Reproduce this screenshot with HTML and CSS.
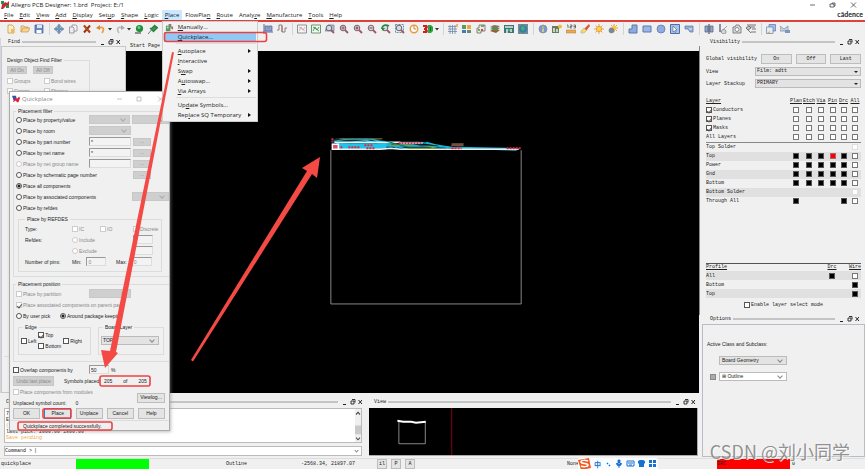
FILE: index.html
```html
<!DOCTYPE html>
<html lang="en">
<head>
<meta charset="utf-8">
<title>Allegro PCB Designer: 1.brd Project: E:/1</title>
<link rel="stylesheet" href="styles.css">
</head>
<body>
<svg class="defs" aria-hidden="true">
  <defs>
    <symbol id="new" viewBox="0 0 10 10"><path d="M2 1h4l2 2v6H2z" fill="#fff0c4" stroke="#c89648" stroke-width=".8"/><path d="M5 5h3v4H5z" fill="#f0bc58"/></symbol>
    <symbol id="open" viewBox="0 0 10 10"><path d="M1 8V2h3l1 1h3v2" fill="#f6dda6" stroke="#c99a54" stroke-width=".8"/><path d="M1 8l2-4h7L8 8z" fill="#f9d58c" stroke="#b98a48" stroke-width=".6"/></symbol>
    <symbol id="save" viewBox="0 0 10 10"><path d="M1 1h8v8H1z" fill="#6b87c4" stroke="#405a94" stroke-width=".7"/><path d="M3 1h5v3H3z" fill="#dce6fa"/><path d="M2.500 6h5v3h-5z" fill="#fff"/></symbol>
    <symbol id="move" viewBox="0 0 10 10"><path d="M5 0l2 2.500H6V4h1.500V3L10 5 7.500 7V6H6v1.500h1L5 10 3 7.500h1V6H2.500v1L0 5l2.500-2v1H4V2.500H3z" fill="#7199bd" stroke="#48708f" stroke-width=".4"/></symbol>
    <symbol id="copy" viewBox="0 0 10 10"><path d="M4 1h4l1 1v5H4z" fill="#f5f5f5" stroke="#8c8c94" stroke-width=".8"/><path d="M1.500 3H5l1 1v5H1.500z" fill="#ededf2" stroke="#85858c" stroke-width=".8"/></symbol>
    <symbol id="delete" viewBox="0 0 10 10"><path d="M2 1.500l6 7M8 1.500l-6 7" stroke="#9c3210" stroke-width="2"/><path d="M2 1.500l5 6" stroke="#e06818" stroke-width=".7"/></symbol>
    <symbol id="undo" viewBox="0 0 10 10"><path d="M3 4c4-2 6 1 3 5" fill="none" stroke="#eda247" stroke-width="1.800"/><path d="M0 4l4-3v5z" fill="#d8842c"/></symbol>
    <symbol id="redo" viewBox="0 0 10 10"><path d="M7 4C3 2 1 5 4 9" fill="none" stroke="#b9b9b9" stroke-width="1.500"/><path d="M10 4L6 1v5z" fill="#aaa"/></symbol>
    <symbol id="gem" viewBox="0 0 10 10"><path d="M1 8.500h6v1H1z" fill="#333"/><circle cx="5.500" cy="4.500" r="3.600" fill="#1d8c3c"/><circle cx="5" cy="3.500" r="1.500" fill="#74cc82"/></symbol>
    <symbol id="pin" viewBox="0 0 10 10"><path d="M0 10l3.500-4" stroke="#555" stroke-width=".8"/><path d="M2 4l4 4M5 7l-2-2 3-3 3 2-3 3M6 1l4 3" fill="#3b9a50" stroke="#2a803e" stroke-width="1.300"/></symbol>
    <symbol id="ruler" viewBox="0 0 10 10"><path d="M1 0v10M0 8h10" stroke="#536da2"/><path d="M2 2h7v5H2z" fill="#8ca4d0" stroke="#49649c" stroke-width=".7"/><path d="M4 4h3" stroke="#c96868"/></symbol>
    <symbol id="wave" viewBox="0 0 10 10"><path d="M0 6h2V1h3v7h3V4h2" fill="none" stroke="#777" stroke-width=".9"/><path d="M5 2v6" stroke="#bc6565"/></symbol>
    <symbol id="rats" viewBox="0 0 10 10"><path d="M.500 1h9v8h-9z" fill="#f4f4f4" stroke="#6e7d88" stroke-width=".8"/><path d="M2 7l2-4 2 3 2-3M2 3l6 4" fill="none" stroke="#c89898" stroke-width=".7"/></symbol>
    <symbol id="ratsg" viewBox="0 0 10 10"><path d="M.500 1h9v8h-9z" fill="#eef8ee" stroke="#587858" stroke-width=".8"/><path d="M2 7l2-4 2 3 2-3M2 3l6 4" fill="none" stroke="#299137" stroke-width=".8"/></symbol>
    <symbol id="lens" viewBox="0 0 10 10"><path d="M6 6l3 3" stroke="#a55858" stroke-width="1.800"/><circle cx="4" cy="4" r="2.800" fill="#ccdfe9" stroke="#765f6c" stroke-width="1"/></symbol>
    <symbol id="zwin" viewBox="0 0 10 10"><path d="M0 7l3-6h6v6z" fill="#b0c3dd" stroke="#506c8f" stroke-width=".6"/><use href="#lens"/></symbol>
    <symbol id="zfill" viewBox="0 0 10 10"><use href="#lens"/><path d="M2.500 2.500h3v3h-3z" fill="#a97080"/></symbol>
    <symbol id="zin" viewBox="0 0 10 10"><use href="#lens"/><path d="M2.500 4h3M4 2.500v3" stroke="#a62525"/></symbol>
    <symbol id="zout" viewBox="0 0 10 10"><use href="#lens"/><path d="M2.500 4h3" stroke="#a62525"/></symbol>
    <symbol id="zprev" viewBox="0 0 10 10"><use href="#lens"/><path d="M1 5c0-4 4-5 7-3" fill="none" stroke="#278b3c" stroke-width="1.600"/><path d="M0 4h4L2 7z" fill="#278b3c"/></symbol>
    <symbol id="zsel" viewBox="0 0 10 10"><path d="M.500.500h8v8h-8z" fill="#e2f0f7" stroke="#4c7b91" stroke-width=".8" stroke-dasharray="2 1"/><use href="#lens"/></symbol>
    <symbol id="refresh" viewBox="0 0 10 10"><circle cx="5" cy="5" r="3.700" fill="#fff" stroke="#e79b43" stroke-width="1.500"/><path d="M5 2v3h2" fill="none" stroke="#db7c20" stroke-width="1"/></symbol>
    <symbol id="three" viewBox="0 0 10 10"><path d="M0 1h4l1 2-1 2 1 2-1 2H0V7h2V6H1V4h1V3H0z" fill="#cf2020"/><path d="M5 1h3l2 2v4L8 9H5z" fill="#2ca542"/><path d="M7 3h1v4H7z" fill="#146c27"/></symbol>
    <symbol id="grid" viewBox="0 0 10 10"><path d="M0 2.500h9M0 5h9M0 7.500h9M2 1v9M4.500 1v9M7 1v9" stroke="#7088ad" stroke-width=".8"/><path d="M8 0h2v3H8z" fill="#efb26f"/></symbol>
    <symbol id="tiles" viewBox="0 0 10 10"><path d="M0 1h4v4H0z" fill="#559d5d"/><path d="M5 1h4v4H5z" fill="#eea544"/><path d="M0 6h4v3H0z" fill="#4c77b5"/><path d="M5 6h4v3H5z" fill="#658c6b"/></symbol>
    <symbol id="sheet" viewBox="0 0 10 10"><path d="M3 1h6v6H5v2H1V4h2z" fill="#e9e9e2" stroke="#77776e" stroke-width=".9"/><path d="M5 2h3M2 6h2" stroke="#51925b" stroke-width="1.500"/><path d="M5 5h2v2H5z" fill="#c64a4a"/></symbol>
    <symbol id="layers" viewBox="0 0 10 10"><path d="M0 7l4-2 6 1-4 3z" fill="#a4533d"/><path d="M0 5l4-2 6 1-4 3z" fill="#4a9a44"/><path d="M0 3l4-2 6 1-4 3z" fill="#7f7760"/></symbol>
    <symbol id="board" viewBox="0 0 10 10"><path d="M0 1h10v8H0z" fill="#3c7778"/><path d="M1 2h8v2H1zM2 5h2v4H2zM6 5h2v3H6z" fill="#b8ccd2"/><path d="M4 5h2v2H4z" fill="#35b05b"/></symbol>
    <symbol id="globe" viewBox="0 0 10 10"><path d="M0 0h10v10H0z" fill="#748b91"/><circle cx="5" cy="5" r="3.800" fill="#347eb0"/><path d="M3 3l3-1 1 3-2 2-2-2z" fill="#4caf66"/></symbol>
    <symbol id="info" viewBox="0 0 10 10"><circle cx="5" cy="5" r="4" fill="#7b99c8" stroke="#8d8fa0" stroke-width=".8"/><path d="M5 4.500V8M5 2.500v1" stroke="#f5e37b" stroke-width="1.300"/></symbol>
    <symbol id="elem" viewBox="0 0 10 10"><path d="M0 2h7v7H0z" fill="#61805f"/><path d="M1 4h2v4H1zM4 5h2v3H4z" fill="#c8d6bd"/><path d="M3 4h1v2H3z" fill="#d43d3d"/><circle cx="8" cy="2.500" r="2" fill="#f0bf35"/></symbol>
    <symbol id="measure" viewBox="0 0 10 10"><path d="M0 6h10v3H0z" fill="#e9a953" stroke="#af7b35" stroke-width=".5"/><path d="M1 1h1v3M4 1h2v1.500H4V4h2M7.500 1h2v3h-2M7.500 2.500h2" fill="none" stroke="#555" stroke-width=".8"/></symbol>
    <symbol id="brush" viewBox="0 0 10 10"><path d="M9 0l1 2-4 5-2-2z" fill="#db5636"/><path d="M4 4l2.500 2.500L4 9H1V7z" fill="#f1d96a" stroke="#aaa27a" stroke-width=".5"/></symbol>
    <symbol id="sun" viewBox="0 0 10 10"><path d="M5 0v10M0 5h10M1.500 1.500l7 7M8.500 1.500l-7 7" stroke="#e59a2c" stroke-width=".9"/><circle cx="5" cy="5" r="2.600" fill="#ffd34c" stroke="#db8b24" stroke-width=".7"/></symbol>
    <symbol id="shade" viewBox="0 0 10 10"><path d="M6 0v8M2 4h8M3 1l6 6M9 1L3 7" stroke="#e59a2c" stroke-width=".9"/><circle cx="6" cy="4" r="2.300" fill="#ffc646"/><circle cx="3.500" cy="6.500" r="2.800" fill="#7a8794"/></symbol>
    <symbol id="poly" viewBox="0 0 10 10"><path d="M4 1h5v8H1V5h3z" fill="#8caadb" stroke="#5b79ae"/></symbol>
    <symbol id="rect" viewBox="0 0 10 10"><path d="M1 2h8v6H1z" fill="#9ab6e4" stroke="#5b79ae"/></symbol>
    <symbol id="circ" viewBox="0 0 10 10"><circle cx="5" cy="5" r="4" fill="#8faadd" stroke="#5f7bb1" stroke-width=".8"/></symbol>
    <symbol id="select" viewBox="0 0 10 10"><path d="M.500.500h9v9h-9z" fill="#a9c1e8" stroke="#4c6fae"/><path d="M3 2l4 4-2 .3L6 8 5 8.500 4.200 7 3 8z" fill="#fff" stroke="#394e74" stroke-width=".5"/></symbol>
    <symbol id="void" viewBox="0 0 10 10"><path d="M1 2h8v6H6L4 5H1z" fill="#93abd7" stroke="#6680ad" stroke-width=".8"/><path d="M5 5h3" stroke="#eee"/></symbol>
    <symbol id="mirror" viewBox="0 0 10 10"><path d="M1 2h3v6H1zM6 2h3v6H6z" fill="#8da5cc" stroke="#57698a" stroke-width=".8"/><path d="M5 0v10" stroke="#333"/></symbol>
    <symbol id="angle" viewBox="0 0 10 10"><path d="M2 0v8" stroke="#63748e" stroke-width="1.500"/><path d="M3 8l6-6" stroke="#8b929d" stroke-width=".8"/><path d="M3 8c1-4 5-3 5 0s-4 2-5 0" fill="#d2d5da" stroke="#777" stroke-width=".7"/></symbol>
    <symbol id="camera" viewBox="0 0 10 10"><path d="M1 3h2l1-2h3l1 2h1v6H1z" fill="#ddd" stroke="#777" stroke-width=".9"/><circle cx="5" cy="5.500" r="2" fill="#fff" stroke="#687585" stroke-width=".8"/></symbol>
    <symbol id="drill" viewBox="0 0 10 10"><path d="M1 1h9M4 3h5M6 5h4M5 8h5" stroke="#666" stroke-width=".9"/><path d="M0 4l3-2 2 2-3 2zM2 6l3 3" fill="#ccc" stroke="#555" stroke-width=".8"/></symbol>
    <symbol id="windows" viewBox="0 0 10 10"><path d="M3 .500h6.500V7H3z" fill="#a3bce9" stroke="#6079a7" stroke-width=".7"/><path d="M.500 3H7v6.500H.500z" fill="#e7ecf4" stroke="#6680ad" stroke-width=".7"/><path d="M1 9l3-2v2z" fill="#edb143"/></symbol>
    <symbol id="mail" viewBox="0 0 10 10"><path d="M0 2l4 3 4-3v5H0z" fill="#c5d0de" stroke="#788ba4" stroke-width=".7"/><path d="M5 6h5v3H5z" fill="#7d98bd"/></symbol>
    <symbol id="logo" viewBox="0 0 10 10"><path d="M0 1h5l1 4-4 2z" fill="#215baa"/><path d="M3 3l3 2 3-3 1 2-2 5H6L5 7 1 9l2-4z" fill="#db2237"/></symbol>
    <symbol id="caret" viewBox="0 0 5 10"><path d="M0 4h4L2 6.500z" fill="#333"/></symbol>
    <symbol id="ctl" viewBox="0 0 20 8"><path d="M1 6.500h3" stroke="#222"/><path d="M10 1.500h3v3M9 3h3v3H9z" fill="none" stroke="#222" stroke-width=".9"/><path d="M16.500 2l3.500 4M20 2l-3.500 4" stroke="#222"/></symbol>
  </defs>
</svg>

<header>
  <div class="titlebar">
    <svg class="app" aria-hidden="true"><path d="M0 0l2 3 2-2 2 1 2-2v7H6L5 5 2 8H0l1-4z" fill="#c92b35"/><path d="M0 0h3v3H0zM5 4h3v3H5z" fill="#239249"/></svg>
    <span>Allegro PCB Designer: 1.brd&nbsp; Project: E:/1</span>
    <svg class="wincontrols" viewBox="0 0 50 10" aria-hidden="true"><path d="M2 5h5M22 4h4v3h-4zM24 4V3h3v3h-1M43 2.500l5 5M48 2.500l-5 5" fill="none" stroke="#444" stroke-width=".8"/></svg>
  </div>
  <nav class="menubar">
    <button><u>F</u>ile</button><button><u>E</u>dit</button><button><u>V</u>iew</button><button><u>A</u>dd</button><button><u>D</u>isplay</button><button>Set<u>u</u>p</button><button><u>S</u>hape</button><button><u>L</u>ogic</button>
    <div class="open">
      <button class="active"><u>P</u>lace</button>
      <div class="menu">
        <svg class="menuicon" viewBox="0 0 10 10" aria-hidden="true"><path d="M1 3h5v6H1z" fill="#4c995a"/><path d="M4 1h3v3h2v3H7V5H4z" fill="#897c78"/><path d="M2 4h2v2H2z" fill="#bfdfc2"/></svg>
        <button><u>M</u>anually...</button>
        <button class="hot"><u>Q</u>uickplace...</button>
        <hr>
        <button class="sub"><u>A</u>utoplace</button>
        <button><u>I</u>nteractive</button>
        <button class="sub">S<u>w</u>ap</button>
        <button class="sub">A<u>u</u>toswap...</button>
        <button class="sub"><u>V</u>ia Arrays</button>
        <hr>
        <button>Up<u>d</u>ate Symbols...</button>
        <button class="sub">Rep<u>l</u>ace SQ Temporary</button>
      </div>
    </div>
    <button>FlowPla<u>n</u></button><button><u>R</u>oute</button><button>Analy<u>z</u>e</button><button><u>M</u>anufacture</button><button><u>T</u>ools</button><button><u>H</u>elp</button>
    <span class="brand">cādence</span>
  </nav>
  <div class="toolbar">
    <div class="tools"><svg><use href="#new"/></svg><svg><use href="#open"/></svg><svg><use href="#save"/></svg></div>
    <div class="tools"><svg><use href="#move"/></svg><svg><use href="#copy"/></svg><svg><use href="#delete"/></svg><svg><use href="#undo"/></svg><svg class="caret"><use href="#caret"/></svg><svg><use href="#redo"/></svg><svg class="caret"><use href="#caret"/></svg><svg><use href="#gem"/></svg><svg><use href="#pin"/></svg></div>
    <div class="tools wide"><svg><use href="#ruler"/></svg><svg><use href="#wave"/></svg></div>
    <div class="tools"><svg><use href="#rats"/></svg><svg><use href="#ratsg"/></svg><svg><use href="#zwin"/></svg><svg><use href="#zfill"/></svg><svg><use href="#zin"/></svg><svg><use href="#zout"/></svg><svg><use href="#zprev"/></svg><svg><use href="#zsel"/></svg><svg><use href="#refresh"/></svg><svg><use href="#three"/></svg><svg class="caret"><use href="#caret"/></svg></div>
    <div class="tools"><svg><use href="#grid"/></svg><svg><use href="#tiles"/></svg><svg><use href="#sheet"/></svg><svg><use href="#layers"/></svg><svg><use href="#board"/></svg><svg><use href="#globe"/></svg></div>
    <div class="tools"><svg><use href="#info"/></svg><svg><use href="#elem"/></svg><svg><use href="#measure"/></svg><svg><use href="#brush"/></svg><svg><use href="#sun"/></svg><svg><use href="#shade"/></svg></div>
    <div class="tools"><svg><use href="#poly"/></svg><svg><use href="#rect"/></svg><svg><use href="#circ"/></svg><svg><use href="#select"/></svg><svg><use href="#void"/></svg></div>
    <div class="tools"><svg><use href="#mirror"/></svg><svg><use href="#angle"/></svg><svg><use href="#camera"/></svg><svg><use href="#drill"/></svg></div>
    <div class="tools"><svg><use href="#windows"/></svg><svg><use href="#mail"/></svg></div>
  </div>
</header>

<main>
  <div class="work">
    <div class="upper">
      <aside class="find">
        <h2 class="dock">Find<i></i><svg><use href="#ctl"/></svg></h2>
        <div class="findbody">
          <fieldset class="filter">
            <legend>Design Object Find Filter</legend>
            <div class="pair"><button class="btn off" disabled>All On</button><button class="btn off" disabled>All Off</button></div>
            <div class="checks">
              <label><input type="checkbox" disabled>Groups</label><label><input type="checkbox" disabled>Bond wires</label>
              <label><input type="checkbox" disabled>Comps</label><label><input type="checkbox" disabled>Shapes</label>
            </div>
          </fieldset>
        </div>
      </aside>
      <section class="design">
        <div class="tab">Start Page</div>
        <div class="canvas">
          <svg viewBox="0 0 572 341" preserveAspectRatio="xMinYMid meet" aria-hidden="true">
            <path d="M204.500 99v153.500h190V99" fill="none" stroke="#a8a8a8" stroke-width=".8"/>
            <path d="M206 98l-1-9 5-2h40l18 5 40 2 40 4 46 1z" fill="#0e5a70" opacity=".6"/>
            <path d="M213 87.500h43M216 87l5 1" stroke="#8a5d15" fill="none"/>
            <path d="M208 90l12-2h25l15 5 22 5M210 93l30-4 25 6 30-4 35 6 60 2M214 95h80l-20-4 18 0 40 6M240 90l40 4 40 2 70 2M246 88l15 4 12 6M300 91l22 6M330 96l50 1" fill="none" stroke="#18b4d8"/>
            <path d="M210 92h50v6h-50z" fill="#20c4ea"/>
            <path d="M208 91h66M274 92h22" stroke="#f3f3f3" stroke-width="1.500"/>
            <path d="M209 98h45l10-1 10 1h118" stroke="#eee" stroke-width="1.500" fill="none"/>
            <path d="M264 94h22M282 97h28l-8-2" stroke="#7ea51c" fill="none"/>
            <path d="M260 90l22 6" stroke="#1f6b50"/>
            <path d="M206 87v4M215 97v-3M222 96h12M238 94h9M240 97h9M272 92h23M325 94h12M325 97h10M380 97h15" stroke="#d72b45" stroke-width="2" stroke-dasharray="2 1"/>
            <path d="M206 93h6v5h-6z" fill="#e94c60" stroke="#fff" stroke-width="1.500"/>
            <path d="M325 92h12v3h-12" fill="#73503d"/>
          </svg>
        </div>
      </section>
    </div>
    <div class="lower">
      <section class="command">
        <h2 class="dock">Command<i></i><svg><use href="#ctl"/></svg></h2>
        <div class="log">
          <div class="lines"><p>7</p><p>E</p><p class="warn">(</p><p>last pick: 2000.00 1800.00</p><p class="warn">Save pending</p></div>
          <div class="scroll"><svg viewBox="0 0 6 30" preserveAspectRatio="none" aria-hidden="true"><path d="M0 15h6v8H0z" fill="#c9c9c9"/><path d="M1 5l2-2 2 2M1 26l2 2 2-2" fill="none" stroke="#444"/></svg></div>
        </div>
        <label class="prompt">Command &gt;<input type="text" value="|"><span class="chev"></span></label>
      </section>
      <section class="view">
        <h2 class="dock">View<i></i><svg><use href="#ctl"/></svg></h2>
        <div class="mini">
          <svg viewBox="0 0 330 48" preserveAspectRatio="xMinYMin meet" aria-hidden="true"><path d="M30.500 14v22.500h27V14" fill="none" stroke="#aaa" stroke-width=".8"/><path d="M29 13l6 1h8l5 1 10-1" fill="none" stroke="#fff" stroke-width="2"/><path d="M84.500 0v48" stroke="#8d0012"/></svg>
        </div>
      </section>
    </div>
  </div>

  <aside class="side">
    <h2 class="dock">Visibility<i></i><svg><use href="#ctl"/></svg></h2>
    <div class="visibility">
      <div class="global"><span>Global visibility</span><button class="btn">On</button><button class="btn">Off</button><button class="btn">Last</button></div>
      <label class="field">View<span class="sel solid"><select><option>Film: adtt</option></select></span></label>
      <label class="field">Layer Stackup<span class="sel solid"><select><option>PRIMARY</option></select></span></label>
      <table class="layers">
        <colgroup><col><col class="c14"><col class="c12"><col class="c12"><col class="c11"><col class="c11"><col class="c12"></colgroup>
        <thead><tr><th>Layer</th><th>Plan</th><th>Etch</th><th>Via</th><th>Pin</th><th>Drc</th><th>All</th></tr></thead>
        <tbody class="kinds">
          <tr><td><label><input type="checkbox" checked>Conductors</label></td><td><b></b></td><td><b></b></td><td><b></b></td><td><b></b></td><td><b></b></td><td><b></b></td></tr>
          <tr><td><label><input type="checkbox" checked>Planes</label></td><td><b></b></td><td><b></b></td><td><b></b></td><td><b></b></td><td><b></b></td><td><b></b></td></tr>
          <tr><td><label><input type="checkbox" checked>Masks</label></td><td><b></b></td><td><b></b></td><td><b></b></td><td><b></b></td><td><b></b></td><td><b></b></td></tr>
          <tr><td>All Layers</td><td><b></b></td><td><b></b></td><td><b></b></td><td><b></b></td><td><b></b></td><td><b></b></td></tr>
        </tbody>
      </table>
      <table class="layers striped">
        <colgroup><col><col class="c14"><col class="c12"><col class="c12"><col class="c11"><col class="c11"><col class="c12"></colgroup>
        <tbody>
          <tr><td>Top Solder</td><td></td><td></td><td></td><td></td><td></td><td><b class="dim"></b></td></tr>
          <tr><td>Top</td><td><b class="k"></b></td><td><b class="k"></b></td><td><b class="k"></b></td><td><b class="r"></b></td><td><b class="k"></b></td><td><b></b></td></tr>
          <tr><td>Power</td><td><b class="k"></b></td><td><b class="k"></b></td><td><b class="k"></b></td><td><b class="k"></b></td><td><b class="k"></b></td><td><b></b></td></tr>
          <tr><td>Gnd</td><td><b class="k"></b></td><td><b class="k"></b></td><td><b class="k"></b></td><td><b class="k"></b></td><td><b class="k"></b></td><td><b></b></td></tr>
          <tr><td>Bottom</td><td><b class="k"></b></td><td><b class="k"></b></td><td><b class="k"></b></td><td><b class="k"></b></td><td><b class="k"></b></td><td><b></b></td></tr>
          <tr><td>Bottom Solder</td><td></td><td></td><td></td><td></td><td></td><td><b class="dim"></b></td></tr>
          <tr><td>Through All</td><td><b class="k"></b></td><td></td><td></td><td></td><td><b class="k"></b></td><td><b></b></td></tr>
        </tbody>
      </table>
      <table class="layers profile">
        <colgroup><col><col class="c34"><col class="c12"></colgroup>
        <thead><tr><th>Profile</th><th>Drc</th><th>Wire</th></tr></thead>
        <tbody>
          <tr><td>All</td><td><b class="k"></b></td><td><b></b></td></tr>
          <tr><td>Bottom</td><td></td><td><b class="k"></b></td></tr>
          <tr><td>Top</td><td></td><td><b class="k"></b></td></tr>
        </tbody>
      </table>
      <label class="enable"><input type="checkbox">Enable layer select mode</label>
    </div>
    <h2 class="dock">Options<i></i><svg><use href="#ctl"/></svg></h2>
    <div class="options">
      <p>Active Class and Subclass:</p>
      <div class="cls"><span class="sel grey"><select aria-label="Class"><option>Board Geometry</option></select></span></div>
      <div class="cls"><i class="swatch"></i><span class="sel"><select aria-label="Subclass"><option>⊞ Outline</option></select></span></div>
    </div>
  </aside>
</main>

<footer>
  <span class="cmd">quickplace</span>
  <span class="busy"></span>
  <span class="layer">Outline</span>
  <span class="coords">-2568.34, 21897.07</span>
  <span class="modes"><button class="btn">il</button><button class="btn">P</button><button class="btn">A</button></span>
  <span class="none">None</span>
  <div class="ime">
    <svg viewBox="0 0 80 12" aria-hidden="true"><path d="M0 2l11-2 2 10-10 2z" fill="#f15a24"/><path d="M10 3c-3-1-7-1-7 1s7 1 7 3-5 2-7 1" fill="none" stroke="#fff" stroke-width="1.500"/><path d="M29 5l1 1M31 7l1 1" stroke="#1672cf" stroke-width="1.500"/><path d="M40 2h2v4h-2zM38.500 5c0 4 5 4 5 0M41 8v2" fill="#1672cf" stroke="#1672cf" stroke-width=".8"/><path d="M49 3h7v5h-7zM50 5h5M51 7h3" fill="none" stroke="#1672cf" stroke-width="1"/><path d="M60 3l2-1h3l2 1v2l-1 1v3h-5V6l-1-1z" fill="#1672cf"/><path d="M71 2h3v3h-3zM75 2h3v3h-3zM71 6h3v3h-3zM75 6h3v3h-3z" fill="#1672cf"/></svg>
    <span>中</span>
  </div>
  <span class="drc">DRC</span><span class="zero">0</span>
</footer>

<div class="dialog" role="dialog" aria-label="Quickplace">
  <div class="dtitle"><svg><use href="#logo"/></svg><span>Quickplace</span><svg class="dctl" viewBox="0 0 50 10" aria-hidden="true"><path d="M2 5h5M22 3h4v4h-4zM43 2.500l5 5M48 2.500l-5 5" fill="none" stroke="#aaa" stroke-width=".7"/></svg></div>
  <div class="dbody">
    <fieldset class="outer">
      <legend>Placement filter</legend>
      <div class="row"><label><input type="radio" name="by">Place by property/value</label><span class="sel off w1"><select disabled aria-label="Property"></select></span><span class="sel off w2"><select disabled aria-label="Value"></select></span></div>
      <div class="row"><label><input type="radio" name="by">Place by room</label><span class="sel off w1"><select disabled aria-label="Room"></select></span></div>
      <div class="row"><label><input type="radio" name="by">Place by part number</label><input class="w1" type="text" value="*" aria-label="Part number"><button class="btn off more" disabled>...</button></div>
      <div class="row"><label><input type="radio" name="by">Place by net name</label><input class="w1" type="text" value="*" aria-label="Net name"><button class="btn off more" disabled>...</button></div>
      <div class="row"><label class="dis"><input type="radio" name="by" disabled>Place by net group name</label><input class="w1" type="text" disabled aria-label="Net group"><button class="btn off more" disabled>...</button></div>
      <div class="row"><label class="long"><input type="radio" name="by">Place by schematic page number</label><button class="btn off more" disabled>...</button></div>
      <div class="row"><label><input type="radio" name="by" checked>Place all components</label></div>
      <div class="row"><label class="long"><input type="radio" name="by">Place by associated components</label><span class="sel off w2"><select disabled aria-label="Associated"></select></span></div>
      <div class="row"><label><input type="radio" name="by">Place by refdes</label></div>
      <fieldset class="refdes">
        <legend>Place by REFDES</legend>
        <div class="rrow"><span>Type:</span><label><input type="checkbox" disabled>IC</label><label><input type="checkbox" disabled>IO</label><label><input type="checkbox" disabled>Discrete</label></div>
        <div class="rrow"><span>Refdes:</span><label class="two"><input type="radio" disabled>Include</label><input type="text" disabled aria-label="Include"></div>
        <div class="rrow"><span></span><label class="two"><input type="radio" disabled>Exclude</label><input type="text" disabled aria-label="Exclude"></div>
        <div class="rrow pins"><span>Number of pins:</span><label>Min:<input type="text" value="0" disabled></label><label>Max:<input type="text" value="0" disabled></label></div>
      </fieldset>
    </fieldset>
    <fieldset class="outer second">
      <legend>Placement position</legend>
      <div class="row"><label class="dis"><input type="checkbox" disabled>Place by partition</label><span class="sel off w1"><select disabled aria-label="Partition"></select></span></div>
      <div class="row"><label class="dis"><input type="checkbox" checked disabled>Place associated components on parent page</label></div>
      <div class="row pick"><label><input type="radio" name="pos">By user pick</label><label><input type="radio" name="pos" checked>Around package keepin</label></div>
      <div class="groups">
        <fieldset class="edge"><legend>Edge</legend><label><input type="checkbox">Left</label><div><label><input type="checkbox" checked>Top</label><label><input type="checkbox">Bottom</label></div><label><input type="checkbox">Right</label></fieldset>
        <fieldset class="layer2"><legend>Board Layer</legend><span class="sel grey"><select aria-label="Board layer"><option>TOP</option></select></span></fieldset>
      </div>
    </fieldset>
    <div class="line"><label class="overlap"><input type="checkbox">Overlap components by</label><input class="pct" type="text" value="50" aria-label="Overlap">%</div>
    <div class="line"><button class="btn off undo" disabled>Undo last place</button><span class="placed">Symbols placed:</span><span class="nums"><span>205</span><span>of</span><span>205</span></span></div>
    <div class="split">
      <div><label class="dis"><input type="checkbox" disabled>Place components from modules</label><p>Unplaced symbol count:<span>0</span></p></div>
      <button class="btn">Viewlog...</button>
    </div>
    <div class="actions"><button class="btn">OK</button><button class="btn default">Place</button><button class="btn">Unplace</button><button class="btn">Cancel</button><button class="btn">Help</button></div>
  </div>
  <div class="dstatus">Quickplace completed successfully.</div>
</div>

<svg class="marks" viewBox="0 0 865 469" aria-hidden="true">
  <g fill="none" stroke="#ee4242" stroke-width="1.600"><rect x="164.500" y="32.500" width="102" height="9" rx="2"/><rect x="100" y="376" width="50" height="10" rx="2"/><rect x="43" y="409" width="28" height="9" rx="1"/><rect x="18" y="422" width="94" height="8" rx="2"/></g>
  <g fill="#f44a45"><path d="M172 52l2 .5L116 352l2 1-13 15-4-18 9 1z"/><path d="M191 360l2 1.500L312 174l5 4 3-21-18 11 5 3z"/></g>
</svg>
<div class="watermark">CSDN @刘小同学</div>
</body>
</html>
```

FILE: styles.css
```css
* { box-sizing: border-box; }
body {
  margin: 0;
  min-height: 100vh;
  display: flex;
  flex-direction: column;
  position: relative;
  overflow: hidden;
  background: #f0f0f0;
  color: #222;
  font: 5px/6px "Liberation Sans", sans-serif;
}
button, input, select { font: inherit; color: inherit; margin: 0; padding: 0; border: 0; }
p, h2 { margin: 0; font: inherit; }
fieldset { margin: 0; padding: 0; border: 1px solid #dcdcdc; min-width: 0; }
legend { padding: 0 2px; line-height: 6px; }
svg { display: block; }
.defs { position: absolute; width: 0; height: 0; }

/* Title, menu and tools */
header { font-family: "Open Sans", sans-serif; font-size: 6px; line-height: 10px; }
.titlebar { height: 10px; display: flex; background: #fff; }
.app { width: 8px; height: 8px; margin: 1px 2px 0 1px; }
.wincontrols { width: 50px; height: 10px; margin-left: auto; margin-right: 7px; }
.menubar { height: 10px; display: flex; padding-left: 1px; background: #fff; }
.menubar > button, .open > button { height: 10px; padding: 0 3px; background: transparent; }
.menubar u { text-underline-offset: 1px; }
.open { position: relative; }
.open > .active { display: block; background: #cce8ff; }
.menu {
  position: absolute;
  z-index: 5;
  left: 0;
  top: 11px;
  width: 96px;
  padding: 0 1px 1px;
  background: #f2f2f2;
  border: 1px solid #ccc;
}
.menu button { display: block; width: 100%; height: 10px; padding: 0 0 0 14px; text-align: left; background: transparent; position: relative; }
.menu .hot { background: #90c8f6; }
.menu hr { margin: 1px 0 1px 12px; border: 0; border-top: 1px solid #ddd; height: 2px; }
.menu .sub::after { content: ""; position: absolute; right: 5px; top: 3px; border: 2px solid transparent; border-left: 3px solid #111; border-right: 0; }
.menuicon { position: absolute; left: 2px; top: 1px; width: 9px; height: 9px; }
.brand { margin-left: auto; padding-right: 2px; font: bold 7px/9px Lato, sans-serif; color: #222; }
.toolbar { height: 18px; display: flex; padding: 1px 0 3px 2px; border-top: 2px solid #df4038; background: #f0f0f0; }
.tools { display: flex; align-items: center; padding: 0 3px 0 2px; border-right: 1px solid #d4d4d4; }
.tools svg { width: 10px; height: 10px; margin: 0 2px; }
.tools svg.caret { width: 5px; margin: 0; }
.tools.wide { width: 129px; justify-content: flex-end; }
.tools:last-child { border-right: 0; }

/* Dock layout */
main { flex: 1; display: flex; min-height: 0; font-family: "Liberation Mono", monospace; }
.work { flex: 1; min-width: 0; display: flex; flex-direction: column; }
.upper { flex: 1; display: flex; min-height: 0; }
.dock { height: 8px; padding: 0 6px 0 7px; display: flex; align-items: center; gap: 2px; }
.dock i { flex: 1; height: 2px; background: #c4c4c4; }
.dock svg { width: 20px; height: 8px; margin-left: 2px; }
.find { width: 126px; display: flex; flex-direction: column; border-left: 1px solid #d6d4e2; }
.findbody { flex: 1; border: 1px solid #c8c8c8; padding: 10px 0 0 2px; font-family: "Liberation Sans", sans-serif; }
.filter { width: 86px; height: 300px; border-left: 0; padding-top: 3px; }
.filter legend { padding-left: 3px; }
.pair { display: flex; gap: 6px; padding-left: 3px; }
.pair .btn { width: 20px; }
.checks { display: grid; grid-template-columns: 37px 1fr; row-gap: 4px; padding: 4px 0 0 3px; color: #888; }
.design { flex: 1; min-width: 0; display: flex; flex-direction: column; }
.tab { height: 13px; padding: 5px 4px 0; }
.canvas { flex: 1; min-height: 0; background: #000; }
.canvas svg { width: 100%; height: 100%; }
.lower { display: flex; height: 65px; gap: 7px; padding: 3px 1px 2px 4px; }
.command { width: 358px; display: flex; flex-direction: column; }
.command .dock, .view .dock { height: 12px; padding-right: 0; }
.command .dock { padding-left: 2px; }
.view .dock { padding-left: 5px; padding-right: 3px; }
.log { flex: 1; display: flex; min-height: 0; overflow: hidden; background: #fff; border: 1px solid #bbb; }
.lines { flex: 1; padding: 2px 0 0 1px; }
.lines p { line-height: 6px; }
.warn { color: #f4a73c; }
.scroll { width: 6px; background: #f0f0f0; }
.scroll svg { width: 100%; height: 100%; }
.prompt { height: 10px; margin-top: 3px; display: flex; align-items: center; background: #fff; border: 1px solid #bbb; }
.prompt input { flex: 1; padding-left: 2px; background: transparent; height: 6px; }
.view { flex: 1; min-width: 0; display: flex; flex-direction: column; }
.mini { flex: 1; min-height: 0; background: #000; border-bottom: 1px solid #aaa; border-right: 1px solid #aaa; }
.mini svg { height: 100%; }

/* Controls */
.btn { height: 8px; padding: 0 1px; line-height: 5px; text-align: center; background: #e4e4e4; border: 1px solid #bdbdbd; white-space: nowrap; }
.btn.off { background: #cfcfcf; border-color: #c6c6c6; color: #888; }
label { white-space: nowrap; }
input[type="checkbox"], input[type="radio"] {
  appearance: none;
  flex: none;
  width: 6px;
  height: 6px;
  margin-right: 1px;
  vertical-align: top;
  background: #fff;
  border: 1px solid #555;
}
input[type="radio"] { border-radius: 50%; }
input[type="radio"]:checked { background: radial-gradient(#222 50%, #fff 60%); }
input[type="checkbox"]:checked::before {
  content: "";
  display: block;
  width: 2px;
  height: 4px;
  margin-left: 1px;
  border: solid #555;
  border-width: 0 1px 1px 0;
  transform: rotate(40deg);
}
input:disabled { border-color: #ccc; color: #888; }
input[type="text"] { min-width: 0; }
.sel { position: relative; display: block; height: 9px; border: 1px solid #bbb; background: #fff; }
.sel select { appearance: none; display: block; width: 100%; height: 7px; padding: 0 1px; line-height: 7px; background: transparent; }
.sel::after, .chev {
  content: "";
  width: 3px;
  height: 3px;
  border: solid #888;
  border-width: 0 1px 1px 0;
  transform: rotate(45deg);
}
.sel::after { position: absolute; right: 4px; top: 1px; }
.chev { margin-right: 3px; }
.sel.solid, .sel.grey { background: #e3e3e3; }
.sel.solid::after { width: 0; height: 0; right: 2px; top: 3px; border: 2px solid transparent; border-top: 2px solid #222; border-bottom: 0; transform: none; }
.sel.off { background: #cfcfcf; border-color: #c8c8c8; }
.sel.off::after { border-color: #aaa; }

/* Visibility and options */
.side { width: 166px; display: flex; flex-direction: column; }
.side .dock { padding-left: 11px; }
.visibility { border-left: 1px solid #888; padding: 8px 4px 0 6px; }
.global, .field { display: grid; grid-template-columns: 49px 1fr; align-items: center; }
.global { grid-template-columns: 51px 1fr 1fr 1fr; column-gap: 4px; }
.global span { white-space: nowrap; }
.global .btn { height: 10px; }
.field { margin-top: 3px; }
.layers { width: 100%; table-layout: fixed; border-collapse: collapse; margin-top: 9px; }
.c11 { width: 11px; }
.c12 { width: 12px; }
.c14 { width: 14px; }
.c34 { width: 34px; }
.layers th { height: 8px; padding: 0; font-weight: normal; text-decoration: underline; white-space: nowrap; }
.layers th:first-child { text-align: left; }
.layers td { height: 9px; padding: 0; line-height: 6px; }
.layers b { display: block; width: 6px; height: 6px; margin: 0 auto; background: #fff; border: 1px solid #777; }
.layers .k { background: #000; border-color: #555; }
.layers .r { background: #f00; border-color: #a66; }
.layers .dim { border-color: #ddd; }
.striped { margin-top: 1px; border-top: 1px solid #888; }
.striped tr:nth-child(even) { background: #e0e0e0; }
.profile { margin-top: 57px; border-top: 1px solid #555; }
.profile tbody tr:nth-child(odd) { background: #e0e0e0; }
.enable { display: flex; justify-content: center; padding: 4px 0 7px; }
.options { flex: 1; border: 1px solid #b8bcc4; margin: 1px 0 1px 3px; padding: 16px 4px; font-family: "Liberation Sans", sans-serif; }
.cls { display: flex; justify-content: flex-end; align-items: center; width: 80px; margin-top: 7px; gap: 3px; }
.options p + .cls { margin-top: 9px; }
.cls .sel { width: 68px; }
.cls .sel select { padding-left: 2px; }
.swatch { width: 6px; height: 6px; background: #aaa; border: 1px solid #888; }

/* Status bar */
footer { height: 12px; display: flex; align-items: center; font-family: "Liberation Mono", monospace; border-top: 1px solid #ddd; }
footer > span { flex: none; }
.cmd { width: 76px; padding-left: 1px; }
.busy { width: 73px; height: 10px; background: #0f0; }
.layer { width: 150px; padding-left: 77px; }
.coords { width: 75px; padding-left: 2px; }
.modes { width: 193px; display: flex; gap: 4px; padding-left: 3px; }
.modes .btn { width: 10px; height: 10px; }
.none { width: 11px; overflow: hidden; }
.ime { position: relative; width: 80px; height: 12px; margin-right: auto; border-radius: 2px; background: #fafcff; }
.ime svg { width: 80px; height: 12px; }
.ime span { position: absolute; left: 16px; top: 2px; font: bold 7px/8px "Noto Sans CJK SC", sans-serif; color: #1672cf; }
.drc { width: 73px; height: 10px; line-height: 10px; background: #f00; }
.zero { width: 75px; padding-left: 2px; }

/* Quickplace window */
.dialog { position: absolute; z-index: 4; left: 9px; top: 91px; width: 161px; background: #f0f0f0; border: 1px solid #aaa; box-shadow: 1px 1px 3px #8888; overflow: hidden; }
.dtitle { height: 13px; display: flex; align-items: center; gap: 2px; padding-left: 2px; background: #fff; color: #888; font: 6px/12px "Open Sans", sans-serif; }
.dtitle svg { width: 8px; height: 8px; }
.dtitle .dctl { width: 50px; height: 10px; margin-left: auto; margin-right: 4px; }
.dbody { padding: 3px 3px 1px 3px; }
.dbody label { display: flex; align-items: center; }
.outer { padding: 0 0 4px 2px; margin-right: -4px; }
.outer > .refdes { margin: 3px 7px 0 2px; padding: 1px 5px 4px 6px; }
.row { display: flex; align-items: center; height: 11px; gap: 2px; }
.row label { width: 71px; }
.row .long { width: 115px; }
.w1 { width: 42px; }
.w2 { width: 37px; }
.more { width: 18px; }
.dis { color: #888; }
.dbody input[type="text"] { height: 9px; padding-left: 1px; background: #f3f3f3; border: 1px solid #ddd; border-top-color: #999; border-left-color: #999; }
.rrow { display: grid; grid-template-columns: 47px 28px 33px 1fr; align-items: center; height: 11px; }
.rrow label { color: #888; }
.rrow .two { grid-column: 2 / 4; }
.rrow input[type="text"] { width: 20px; }
.pins { grid-template-columns: 47px 44px 1fr; }
.pins label { color: #222; gap: 5px; }
.second { margin-top: 4px; padding-top: 1px; }
.pick { gap: 2px; }
.pick label:first-child { width: 42px; }
.groups { display: flex; gap: 7px; padding: 3px 5px 2px 2px; }
.edge { width: 73px; height: 31px; padding: 0 2px 3px; }
.edge legend, .layer2 legend { margin-left: 2px; }
.edge { display: flex; align-items: center; gap: 2px; }
.edge > div { display: flex; flex-direction: column; gap: 5px; }
.layer2 { flex: 1; padding: 6px 4px 0 2px; }
.line { display: flex; align-items: center; height: 11px; }
.line + .line { height: 12px; }
.outer + .line { margin-top: 2px; }
.overlap { width: 76px; }
.dbody .pct { width: 20px; height: 10px; margin-right: 2px; background: #fff; }
.undo { width: 41px; height: 10px; }
.placed { width: 50px; padding-left: 10px; }
.nums { display: flex; gap: 11px; }
.split { display: flex; justify-content: space-between; align-items: center; height: 21px; padding-right: 1px; }
.split p { margin-top: 5px; }
.split p span { margin-left: 9px; }
.split .btn { width: 28px; height: 10px; }
.actions { display: flex; justify-content: space-between; padding-right: 1px; }
.actions .btn { width: 27px; height: 11px; }
.actions .default { border-color: #2b7fd4; }
.dstatus { height: 10px; padding: 2px 0 0 13px; border-top: 1px solid #ddd; }

/* Annotations */
.marks { position: absolute; z-index: 8; left: 0; top: 0; width: 865px; height: 469px; pointer-events: none; }
.watermark { position: absolute; z-index: 9; right: 15px; bottom: 6px; font: 18px/26px "Noto Sans CJK SC", sans-serif; color: #777c; text-shadow: 1px 1px 0 #fffc; white-space: nowrap; pointer-events: none; }
```
